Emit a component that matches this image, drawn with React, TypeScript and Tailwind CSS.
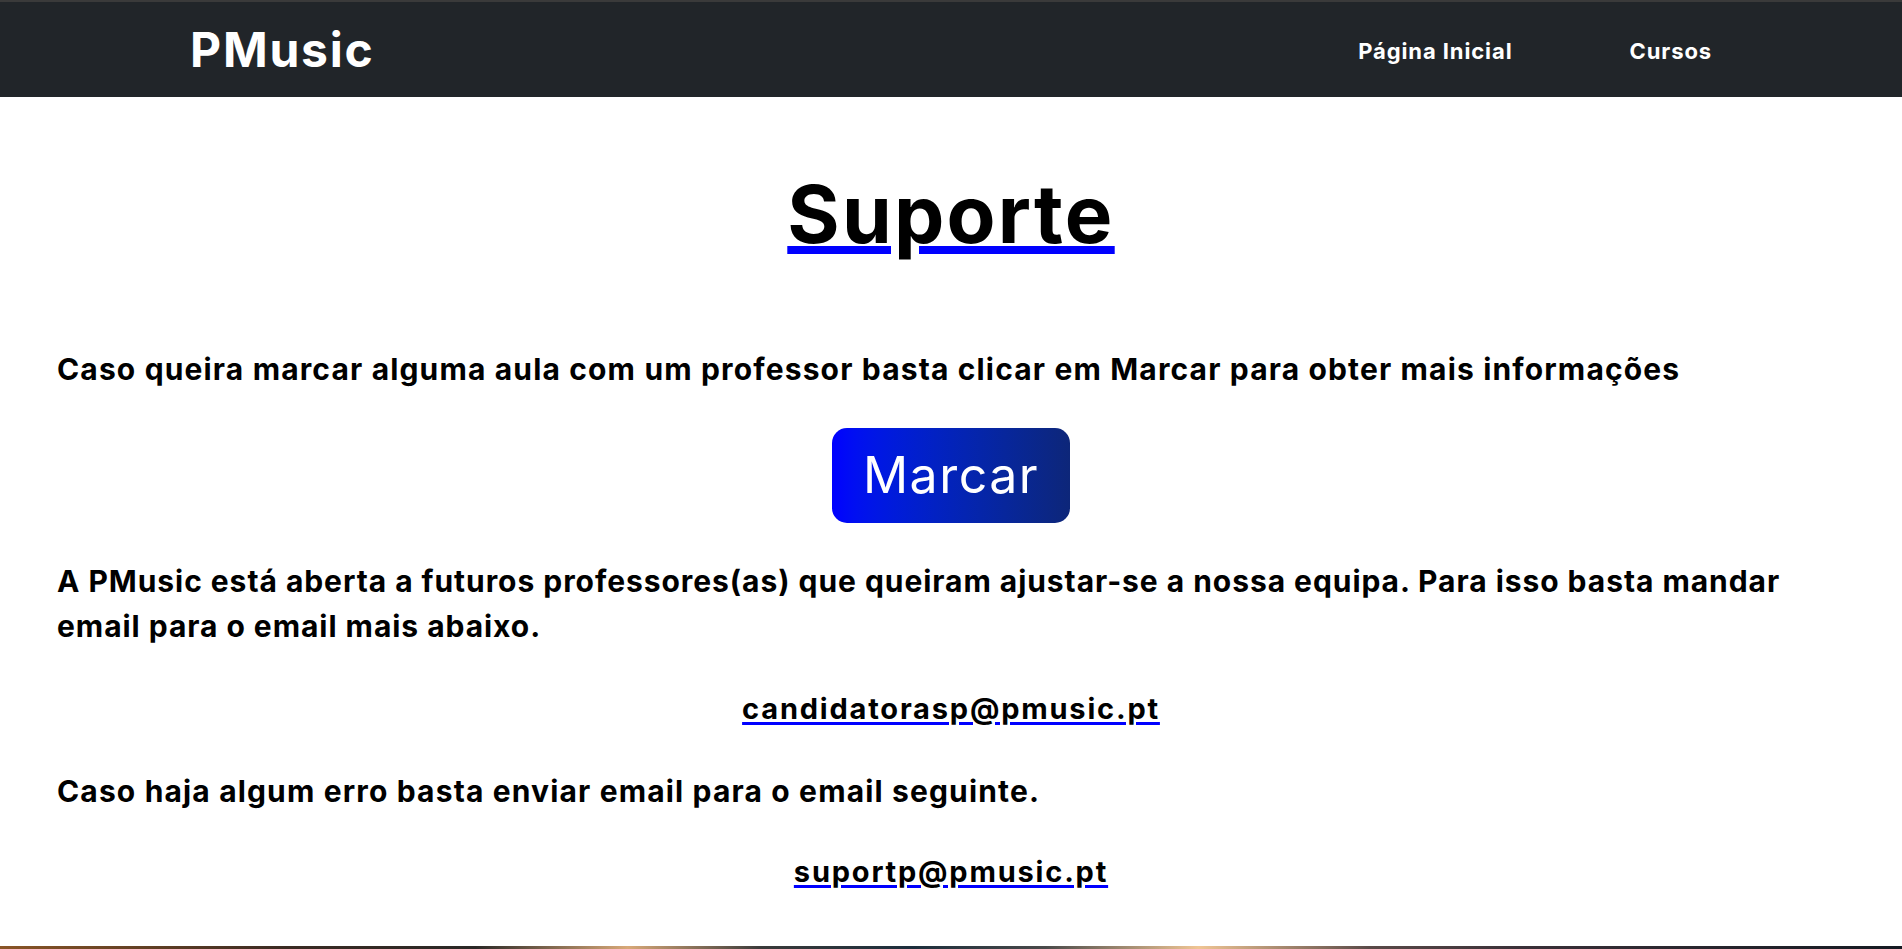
export default function App() {
  return (
    <div className="flex h-[949px] flex-col overflow-hidden bg-white font-['Inter',sans-serif] text-black">
      <div className="h-[2px] bg-[#3a3a3a]" />
      <header className="flex h-[95px] items-center justify-between bg-[#212529] pl-[190px] pr-[190px]">
        <a href="#" className="text-[48px] font-bold leading-none tracking-[1.8px] text-white">
          PMusic
        </a>
        <nav className="flex items-center gap-[117px] pt-[3px] text-[22px] font-bold leading-[30px] tracking-[0.9px] text-white">
          <a href="#">Página Inicial</a>
          <a href="#">Cursos</a>
        </nav>
      </header>

      <main className="flex-1 px-[57px]">
        <h1 className="mt-[69px] text-center text-[80px] font-bold leading-[96px] tracking-[2.2px]">
          <span className="underline decoration-[#0000ff] decoration-[8px] underline-offset-[3px]">Suporte</span>
        </h1>

        <p className="mt-[85px] text-[30px] font-bold leading-[45px] tracking-[1.15px]">
          Caso queira marcar alguma aula com um professor basta clicar em Marcar para obter mais informações
        </p>

        <div className="mt-[36px] flex justify-center">
          <button className="flex h-[95px] w-[238px] items-center justify-center rounded-[15px] bg-gradient-to-r from-[#0000ff] to-[#0d2679] text-[50px] font-normal tracking-[1.5px] text-white">
            Marcar
          </button>
        </div>

        <p className="mt-[36px] text-[30px] font-bold leading-[45px] tracking-[0.95px]">
          A PMusic está aberta a futuros professores(as) que queiram ajustar-se a nossa equipa. Para isso basta mandar
          <br />
          email para o email mais abaixo.
        </p>

        <div className="mt-[39px] text-center text-[29px] font-bold leading-[42px] tracking-[1.8px]">
          <a
            href="#"
            className="underline decoration-[#0000ff] decoration-[3px] underline-offset-[3px]"
          >
            candidatorasp@pmusic.pt
          </a>
        </div>

        <p className="mt-[39px] text-[30px] font-bold leading-[45px] tracking-[1.15px]">
          Caso haja algum erro basta enviar email para o email seguinte.
        </p>

        <div className="mt-[37px] text-center text-[29px] font-bold leading-[42px] tracking-[1.8px]">
          <a
            href="#"
            className="underline decoration-[#0000ff] decoration-[3px] underline-offset-[3px]"
          >
            suportp@pmusic.pt
          </a>
        </div>
      </main>

      <div className="h-[3px] bg-[linear-gradient(90deg,#8a5526_0%,#3a2a22_15%,#2a2826_25%,#d8a878_33%,#3a3a3a_40%,#1c2e3c_48%,#4a4a4a_55%,#f0c594_63%,#5a4a48_72%,#3a3038_80%,#151a22_100%)]" />
    </div>
  );
}
